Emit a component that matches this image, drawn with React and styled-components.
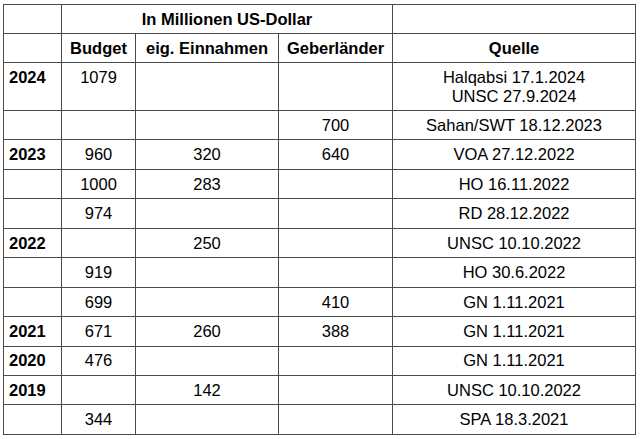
import React from 'react'
import styled, { createGlobalStyle } from 'styled-components'

const GlobalStyle = createGlobalStyle`
  html, body { margin: 0; padding: 0; background: #fff; }
  body { font-family: "Liberation Sans", Arial, sans-serif; color: #000; }
`

const Page = styled.div`
  padding: 4px 0 0 3px;
`

const Table = styled.table`
  border-collapse: collapse;
  table-layout: fixed;
  width: 632px;
  font-size: 16.5px;
  line-height: 18.5px;
`

const Row = styled.tr`
  height: ${p => p.$h || 29.45}px;
`

const Cell = styled.td`
  border: 1px solid #4a4a4a;
  padding: 0 5px;
  text-align: ${p => (p.$left ? 'left' : 'center')};
  vertical-align: ${p => (p.$top ? 'top' : 'middle')};
  padding-top: ${p => (p.$top ? '5px' : '0')};
  font-weight: ${p => (p.$bold ? 700 : 400)};
  white-space: nowrap;
`

const HeadCell = styled(Cell).attrs({ as: 'th' })`
  font-weight: 700;
`

const rows = [
  ['2024', '1079', '', '', ['Halqabsi 17.1.2024', 'UNSC 27.9.2024']],
  ['', '', '', '700', 'Sahan/SWT 18.12.2023'],
  ['2023', '960', '320', '640', 'VOA 27.12.2022'],
  ['', '1000', '283', '', 'HO 16.11.2022'],
  ['', '974', '', '', 'RD 28.12.2022'],
  ['2022', '', '250', '', 'UNSC 10.10.2022'],
  ['', '919', '', '', 'HO 30.6.2022'],
  ['', '699', '', '410', 'GN 1.11.2021'],
  ['2021', '671', '260', '388', 'GN 1.11.2021'],
  ['2020', '476', '', '', 'GN 1.11.2021'],
  ['2019', '', '142', '', 'UNSC 10.10.2022'],
  ['', '344', '', '', 'SPA 18.3.2021'],
]

export default function App() {
  return (
    <>
      <GlobalStyle />
      <Page>
        <Table>
          <colgroup>
            <col style={{ width: 58 }} />
            <col style={{ width: 74 }} />
            <col style={{ width: 143 }} />
            <col style={{ width: 114 }} />
            <col style={{ width: 243 }} />
          </colgroup>
          <thead>
            <Row $h={29}>
              <HeadCell />
              <HeadCell colSpan={3}>In Millionen US-Dollar</HeadCell>
              <HeadCell />
            </Row>
            <Row $h={29}>
              <HeadCell />
              <HeadCell>Budget</HeadCell>
              <HeadCell>eig. Einnahmen</HeadCell>
              <HeadCell>Geberländer</HeadCell>
              <HeadCell>Quelle</HeadCell>
            </Row>
          </thead>
          <tbody>
            {rows.map((r, i) => {
              const multi = Array.isArray(r[4])
              return (
                <Row key={i} $h={multi ? 48 : undefined}>
                  <Cell $left $bold $top={multi}>{r[0]}</Cell>
                  <Cell $top={multi}>{r[1]}</Cell>
                  <Cell $top={multi}>{r[2]}</Cell>
                  <Cell $top={multi}>{r[3]}</Cell>
                  <Cell $top={multi}>
                    {multi ? r[4].map((l, j) => <div key={j}>{l}</div>) : r[4]}
                  </Cell>
                </Row>
              )
            })}
          </tbody>
        </Table>
      </Page>
    </>
  )
}
